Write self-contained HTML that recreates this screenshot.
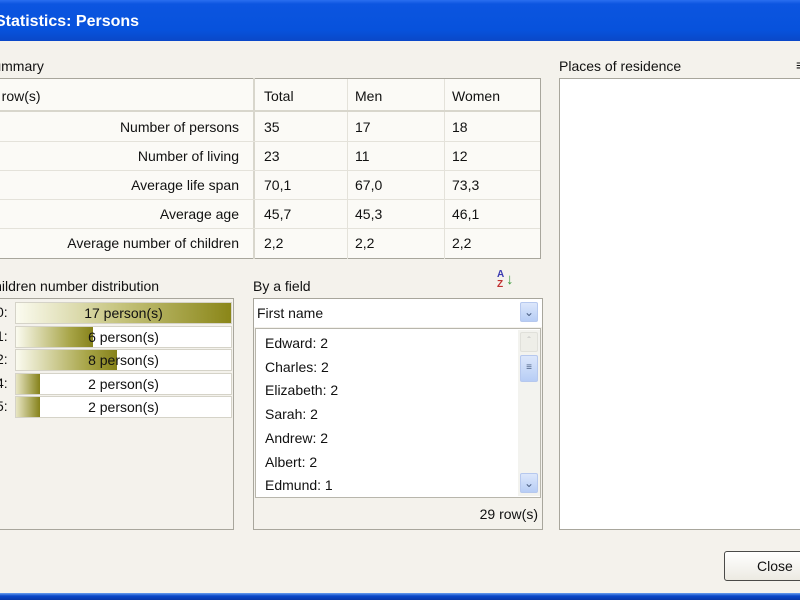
<!DOCTYPE html>
<html><head><meta charset="utf-8"><style>
*{margin:0;padding:0;box-sizing:border-box}
body{width:800px;height:600px;overflow:hidden;background:#f4f2ec;font-family:"Liberation Sans",sans-serif;font-size:14px;color:#111;position:relative}
.a{position:absolute}
.title{left:0;top:0;width:800px;height:41px;background:linear-gradient(#2a6ef0 0,#0c55e0 4px,#0752dc 30px,#0a48c8 41px)}
.title span{position:absolute;left:-5px;top:13px;color:#fff;font-weight:bold;font-size:16px}
.box{border:1px solid #a8a69c;background:#fbfaf6}
.cell{position:absolute;height:29px;line-height:31px;white-space:nowrap}
.hl{position:absolute;background:#d8d6cc}
.bar{position:absolute;left:15px;width:217px;height:22px;background:#fff;border:1px solid #d5d3c8;text-align:center;line-height:21px}
.fill{position:absolute;left:0;top:0;bottom:0}
.bar span{position:relative}
.btnsb{position:absolute;width:18px;height:20px;border-radius:2px;background:linear-gradient(#dce7fb,#b7cdf5);border:1px solid #b6c8ee;color:#4d6185;font-size:10px;text-align:center;line-height:18px}
</style></head><body>
<div class="a title"><span>Statistics: Persons</span></div>

<div class="a" style="left:-16px;top:58px">Summary</div>
<div class="a box" style="left:-2px;top:78px;width:543px;height:181px"></div>
<div class="hl" style="left:253px;top:78px;width:2px;height:181px"></div>
<div class="hl" style="left:347px;top:79px;width:1px;height:180px;background:#e4e2da"></div>
<div class="hl" style="left:444px;top:79px;width:1px;height:180px;background:#e4e2da"></div>
<div class="hl" style="left:0;top:110px;width:540px;height:2px"></div>
<div class="hl" style="left:0;top:141px;width:540px;height:1px;background:#e4e2da"></div>
<div class="hl" style="left:0;top:170px;width:540px;height:1px;background:#e4e2da"></div>
<div class="hl" style="left:0;top:199px;width:540px;height:1px;background:#e4e2da"></div>
<div class="hl" style="left:0;top:228px;width:540px;height:1px;background:#e4e2da"></div>
<div class="cell" style="left:-10px;top:81px">0 row(s)</div>
<div class="cell" style="left:264px;top:81px">Total</div>
<div class="cell" style="left:355px;top:81px">Men</div>
<div class="cell" style="left:452px;top:81px">Women</div>
<div class="cell" style="right:561px;top:112px">Number of persons</div>
<div class="cell" style="left:264px;top:112px">35</div><div class="cell" style="left:355px;top:112px">17</div><div class="cell" style="left:452px;top:112px">18</div>
<div class="cell" style="right:561px;top:141px">Number of living</div>
<div class="cell" style="left:264px;top:141px">23</div><div class="cell" style="left:355px;top:141px">11</div><div class="cell" style="left:452px;top:141px">12</div>
<div class="cell" style="right:561px;top:170px">Average life span</div>
<div class="cell" style="left:264px;top:170px">70,1</div><div class="cell" style="left:355px;top:170px">67,0</div><div class="cell" style="left:452px;top:170px">73,3</div>
<div class="cell" style="right:561px;top:199px">Average age</div>
<div class="cell" style="left:264px;top:199px">45,7</div><div class="cell" style="left:355px;top:199px">45,3</div><div class="cell" style="left:452px;top:199px">46,1</div>
<div class="cell" style="right:561px;top:228px">Average number of children</div>
<div class="cell" style="left:264px;top:228px">2,2</div><div class="cell" style="left:355px;top:228px">2,2</div><div class="cell" style="left:452px;top:228px">2,2</div>

<div class="a" style="left:-16px;top:278px">Children number distribution</div>
<div class="a box" style="left:-2px;top:298px;width:236px;height:232px;background:#f4f2ec"></div>
<div class="a" style="left:-4px;top:304px">0:</div>
<div class="a" style="left:-4px;top:328px">1:</div>
<div class="a" style="left:-4px;top:351px">2:</div>
<div class="a" style="left:-4px;top:375px">4:</div>
<div class="a" style="left:-4px;top:398px">5:</div>
<div class="bar" style="top:302px"><div class="fill" style="width:215px;background:linear-gradient(90deg,#fbfbf0,#c4c27a 50%,#8a8618)"></div><span>17 person(s)</span></div>
<div class="bar" style="top:326px"><div class="fill" style="width:77px;background:linear-gradient(90deg,#fbfbf0,#a8a548 70%,#86821a)"></div><span>6 person(s)</span></div>
<div class="bar" style="top:349px"><div class="fill" style="width:101px;background:linear-gradient(90deg,#fbfbf0,#a8a548 70%,#86821a)"></div><span>8 person(s)</span></div>
<div class="bar" style="top:373px"><div class="fill" style="width:24px;background:linear-gradient(90deg,#e8e6c4,#86821a)"></div><span>2 person(s)</span></div>
<div class="bar" style="top:396px"><div class="fill" style="width:24px;background:linear-gradient(90deg,#e8e6c4,#86821a)"></div><span>2 person(s)</span></div>

<div class="a" style="left:253px;top:278px">By a field</div>
<div class="a" style="left:497px;top:270px;font-size:10px;font-weight:bold;line-height:10px;color:#3a3ab0">A<br><span style="color:#c03030">Z</span></div>
<div class="a" style="left:506px;top:271px;color:#3a9a3a;font-size:15px;font-weight:bold">↓</div>
<div class="a box" style="left:253px;top:298px;width:290px;height:232px;background:#f4f2ec"></div>
<div class="a" style="left:254px;top:299px;width:288px;height:28px;background:#fff"></div>
<div class="a" style="left:257px;top:305px">First name</div>
<div class="btnsb" style="left:520px;top:302px;font-size:12px">&#8964;</div>
<div class="a" style="left:255px;top:328px;width:286px;height:170px;background:#fff;border:1px solid #b8b6ac"></div>
<div class="a" style="left:518px;top:330px;width:22px;height:166px;background:#f3f3ef"></div>
<div class="btnsb" style="left:520px;top:332px;background:#eeeee8;border-color:#e0e0da;color:#bbb">&#710;</div>
<div class="btnsb" style="left:520px;top:355px;height:27px;line-height:24px">≡</div>
<div class="btnsb" style="left:520px;top:473px;font-size:12px">&#8964;</div>
<div class="a" style="left:265px;top:332px;line-height:23.7px">Edward: 2<br>Charles: 2<br>Elizabeth: 2<br>Sarah: 2<br>Andrew: 2<br>Albert: 2<br>Edmund: 1</div>
<div class="a" style="right:262px;top:506px">29 row(s)</div>

<div class="a" style="left:559px;top:58px">Places of residence</div>
<div class="a" style="left:796px;top:57px;font-weight:bold">≡</div>
<div class="a box" style="left:559px;top:78px;width:250px;height:452px;background:#fff"></div>

<div class="a" style="left:724px;top:551px;width:90px;height:30px;border:1px solid #4a4a48;border-radius:3px;background:linear-gradient(#fff,#eceae2);padding-left:32px;line-height:29px">Close</div>
<div class="a" style="left:0;top:593px;width:800px;height:7px;background:linear-gradient(#6aa0f0,#0a48c8 3px,#0838a8)"></div>
</body></html>
